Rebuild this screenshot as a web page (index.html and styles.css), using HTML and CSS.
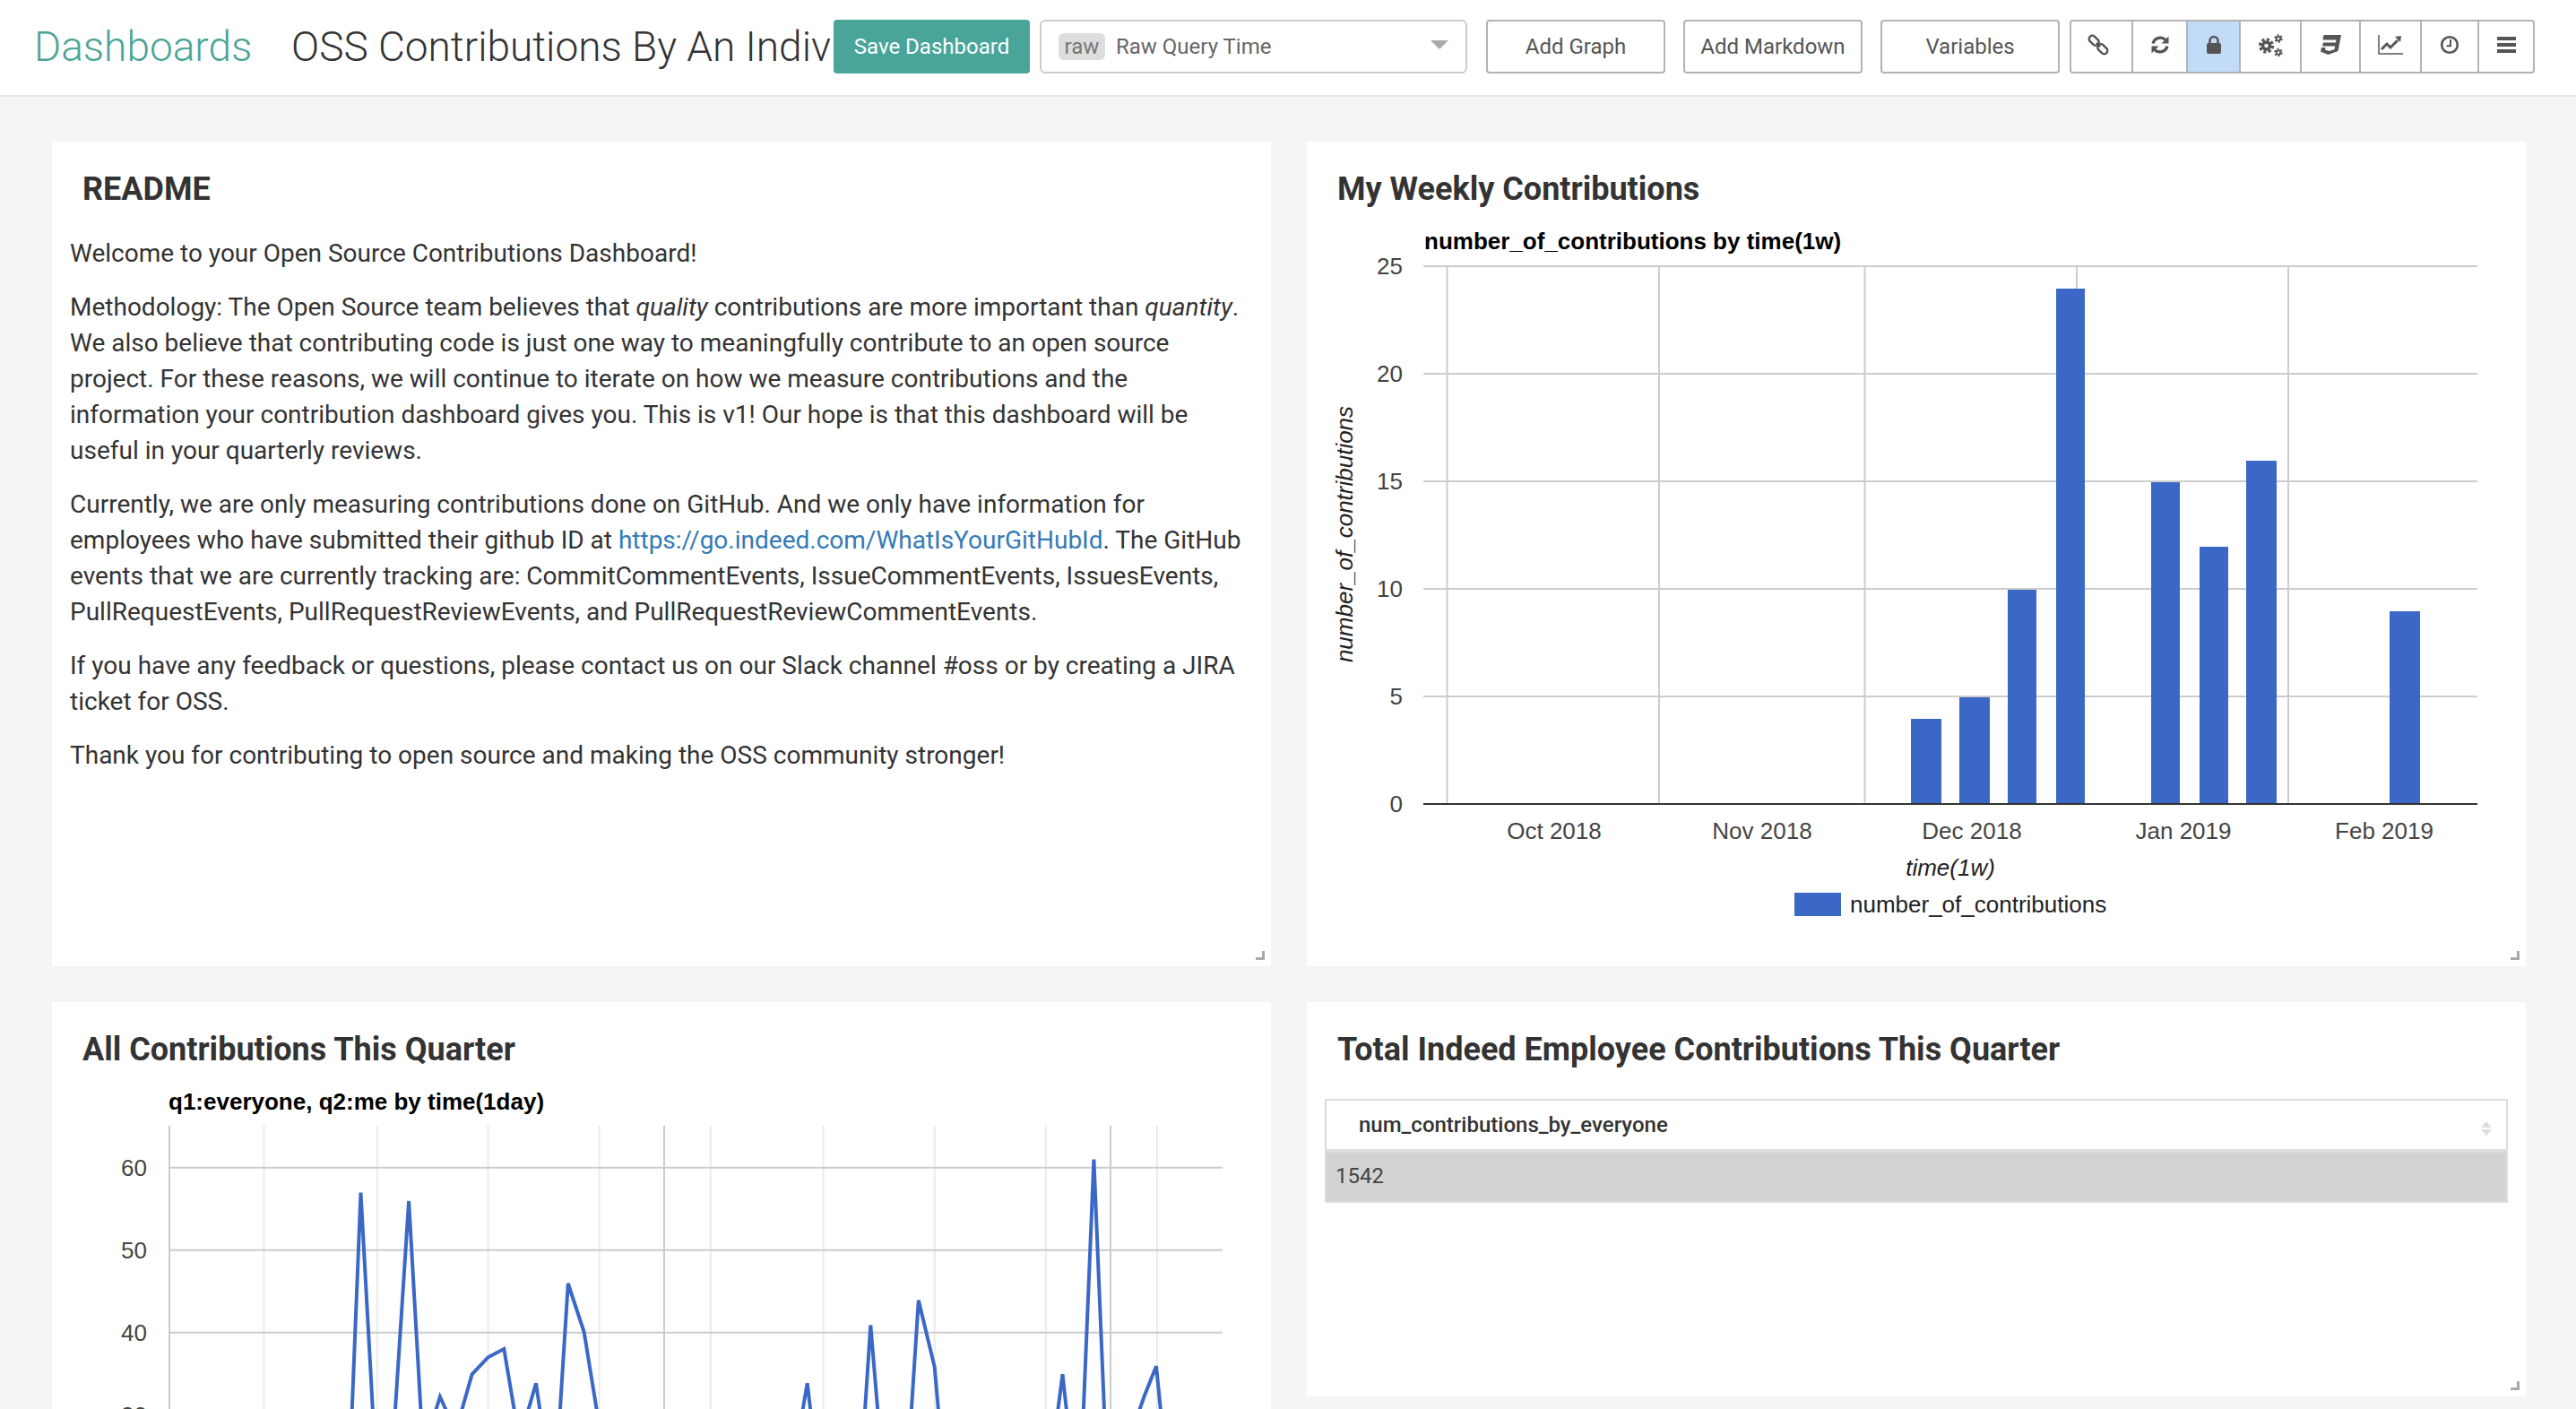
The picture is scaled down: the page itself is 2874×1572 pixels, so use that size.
FILE: index.html
```html
<!DOCTYPE html>
<html lang="en">
<head>
    <meta charset="UTF-8">
    <title>OSS Contributions By An Individual Contributor</title>
    <link rel="stylesheet" href="styles.css">
</head>
<body>
    <header class="topbar">
        <a class="brand">Dashboards</a>
        <div class="dash-title">OSS Contributions By An Individual Contributor</div>
        <button class="btn btn-save">Save Dashboard</button>
        <div class="query-select">
            <span class="query-tag">raw</span>
            <span class="query-name">Raw Query Time</span>
            <span class="query-arrow"></span>
        </div>
        <button class="btn btn-add">Add Graph</button>
        <button class="btn btn-add">Add Markdown</button>
        <button class="btn btn-add">Variables</button>
        <div class="tools">
            <div class="tool t-link">
                <svg class="icon" width="24" height="24" viewBox="0 0 24 24"><g transform="rotate(-45 12 12)" fill="none" stroke="#555" stroke-width="2.400"><rect x="8.300" y="-1" width="7.400" height="12.500" rx="3.700"/><rect x="8.300" y="12.500" width="7.400" height="12.500" rx="3.700"/><path d="M12 9v6"/></g></svg>
            </div>
            <div class="tool t-refresh">
                <svg class="icon" width="24" height="24" viewBox="0 0 24 24"><g fill="none" stroke="#555" stroke-width="3.200"><path d="M4 10.500A8.400 8.400 0 0 1 18.500 7"/><path d="M20 13.500A8.400 8.400 0 0 1 5.500 17"/></g><path fill="#555" d="M21.500 2.500v8h-8zM2.500 21.500v-8h8z"/></svg>
            </div>
            <div class="tool t-lock active">
                <svg class="icon" width="24" height="24" viewBox="0 0 24 24"><rect x="4" y="10" width="16" height="12" rx="2" fill="#555"/><path d="M7.500 10.500V7.500a4.500 4.500 0 0 1 9 0v3" fill="none" stroke="#555" stroke-width="2.600"/></svg>
            </div>
            <div class="tool t-cogs">
                <svg class="icon" width="27" height="25" viewBox="0 0 27 25"><g fill="none" stroke="#555"><circle cx="8.500" cy="13" r="4" stroke-width="3.600"/><circle cx="8.500" cy="13" r="7" stroke-width="3.200" stroke-dasharray="3.200 2.300"/><circle cx="22" cy="5" r="2.300" stroke-width="1.900"/><circle cx="22" cy="5" r="4" stroke-width="1.600" stroke-dasharray="2.200 2"/><circle cx="22" cy="20.500" r="2.300" stroke-width="1.900"/><circle cx="22" cy="20.500" r="4" stroke-width="1.600" stroke-dasharray="2.200 2"/></g></svg>
            </div>
            <div class="tool t-css">
                <svg class="icon" width="24" height="22" viewBox="0 0 24 22"><path fill="#555" d="M4.500 0H24l-3.500 18-11 4L1 18.500 2 14h4.500L6 16.500l4.500 1.500 6-2 .7-3.500H3l1-4h14l.5-3h-15z"/></svg>
            </div>
            <div class="tool t-chart">
                <svg class="icon" width="28" height="22" viewBox="0 0 28 22"><path d="M1 0v21h27" fill="none" stroke="#555" stroke-width="1.500"/><path d="M4 16l6-6 4 4 8-8" fill="none" stroke="#555" stroke-width="3"/><path fill="#555" d="M19 2l7-1-1 7z"/></svg>
            </div>
            <div class="tool t-clock">
                <svg class="icon" width="22" height="22" viewBox="0 0 22 22"><circle cx="11" cy="11" r="8.800" fill="none" stroke="#555" stroke-width="2.600"/><path d="M12 5v7.200H7.500" fill="none" stroke="#555" stroke-width="2"/></svg>
            </div>
            <div class="tool t-bars">
                <svg class="icon" width="21" height="18" viewBox="0 0 21 18"><path fill="#555" d="M0 0h21v4H0zM0 7h21v4H0zM0 14h21v4H0z"/></svg>
            </div>
        </div>
    </header>

    <main class="board">
        <section class="panel panel-top">
            <h2>README</h2>
            <div class="readme">
                <p>Welcome to your Open Source Contributions Dashboard!</p>
                <p>Methodology: The Open Source team believes that <em>quality</em> contributions are more important than <em>quantity</em>. We also believe that contributing code is just one way to meaningfully contribute to an open source project. For these reasons, we will continue to iterate on how we measure contributions and the information your contribution dashboard gives you. This is v1! Our hope is that this dashboard will be useful in your quarterly reviews.</p>
                <p>Currently, we are only measuring contributions done on GitHub. And we only have information for employees who have submitted their github ID at <a href="#">https://go.indeed.com/WhatIsYourGitHubId</a>. The GitHub events that we are currently tracking are: CommitCommentEvents, IssueCommentEvents, IssuesEvents, PullRequestEvents, PullRequestReviewEvents, and PullRequestReviewCommentEvents.</p>
                <p>If you have any feedback or questions, please contact us on our Slack channel #oss or by creating a JIRA ticket for OSS.</p>
                <p>Thank you for contributing to open source and making the OSS community stronger!</p>
            </div>
            <span class="resize-handle"></span>
        </section>

        <section class="panel panel-top">
            <h2>My Weekly Contributions</h2>
            <svg class="chart" width="1360" height="838" viewBox="0 0 1360 838">
                <text class="c-title" x="131" y="38">number_of_contributions by time(1w)</text>
                <g class="grid">
                    <path d="M130 57H1306M130 177H1306M130 297H1306M130 417H1306M130 537H1306"/>
                    <path d="M156.500 57V657M393 57V657M622.500 57V657M859 57V657M1095 57V657"/>
                </g>
                <g class="bars">
                    <rect x="674" y="562" width="34" height="95"/>
                    <rect x="728" y="538" width="34" height="119"/>
                    <rect x="782" y="418" width="32" height="239"/>
                    <rect x="836" y="82" width="32" height="575"/>
                    <rect x="942" y="298" width="32" height="359"/>
                    <rect x="996" y="370" width="32" height="287"/>
                    <rect x="1048" y="274" width="34" height="383"/>
                    <rect x="1208" y="442" width="34" height="215"/>
                </g>
                <path class="axis" d="M130 657H1306"/>
                <g class="y-labels">
                    <text x="107" y="66">25</text>
                    <text x="107" y="186">20</text>
                    <text x="107" y="306">15</text>
                    <text x="107" y="426">10</text>
                    <text x="107" y="546">5</text>
                    <text x="107" y="666">0</text>
                </g>
                <g class="x-labels">
                    <text x="276" y="696">Oct 2018</text>
                    <text x="508" y="696">Nov 2018</text>
                    <text x="742" y="696">Dec 2018</text>
                    <text x="978" y="696">Jan 2019</text>
                    <text x="1202" y="696">Feb 2019</text>
                </g>
                <text class="c-axis-title" x="718" y="737">time(1w)</text>
                <text class="c-axis-title" transform="translate(51 356) rotate(-90)">number_of_contributions</text>
                <rect class="swatch" x="544" y="756" width="52" height="26"/>
                <text class="c-legend" x="606" y="778">number_of_contributions</text>
            </svg>
            <span class="resize-handle"></span>
        </section>

        <section class="panel panel-long">
            <h2>All Contributions This Quarter</h2>
            <svg class="chart" width="1360" height="440" viewBox="0 0 1360 440">
                <text class="c-title" x="130" y="38">q1:everyone, q2:me by time(1day)</text>
                <path class="grid-minor" d="M236.500 56V400M363 56V400M486.500 56V400M610.600 56V400M734.700 56V400M860.600 56V400M984.700 56V400M1108.800 56V400M1233 56V400"/>
                <g class="grid">
                    <path d="M131 56V400M683 56V400M1181 56V400"/>
                    <path d="M131 102.700H1306M131 194.700H1306M131 286.700H1306M131 378.700H1306"/>
                </g>
                <g class="y-labels">
                    <text x="106" y="111.700">60</text>
                    <text x="106" y="203.700">50</text>
                    <text x="106" y="295.700">40</text>
                    <text x="106" y="387.700">30</text>
                </g>
                <path class="series" d="M334.700 374L344.500 130.700L357.900 374M382.900 374L398.100 140L411.500 374M428 374L432.900 358.300L440 374M457 374L468.600 333.300L486.500 314.300L504.300 305L515.900 374M531.100 374L540 343.300L544.500 374M566.800 374L575.800 232L593.600 286L607.900 374M837.400 374L842.700 343.300L846.300 374M907 374L913.300 278.300L921.300 374M958.800 374L966.800 250.700L984.700 325L989 374M1122.200 374L1127.500 333.300L1132 374M1150.800 374L1162.400 93.700L1174 374M1213 374L1218.500 358L1232 324.300L1237 374"/>
            </svg>
        </section>

        <section class="panel panel-short">
            <h2>Total Indeed Employee Contributions This Quarter</h2>
            <div class="table-wrap">
                <table class="data-table">
                    <thead>
                        <tr>
                            <th>num_contributions_by_everyone
                                <svg class="sort" width="14" height="16" viewBox="0 0 14 16"><path fill="#ddd" d="M7 0l6 7H1zM7 16l6-7H1z"/></svg>
                            </th>
                        </tr>
                    </thead>
                    <tbody>
                        <tr><td>1542</td></tr>
                    </tbody>
                </table>
            </div>
            <span class="resize-handle"></span>
        </section>
    </main>
</body>
</html>
```
FILE: styles.css
```css
html, body {
    margin: 0;
    height: 1572px;
    overflow: hidden;
}
body {
    background-color: #f5f5f5;
    color: #333;
    font-family: Roboto, "Noto Sans", sans-serif;
    font-size: 28px;
}

/* top bar */
.topbar {
    display: flex;
    align-items: center;
    height: 104px;
    padding: 0 0 2px 38px;
    background-color: #fff;
    border-bottom: 2px solid #e7e7e7;
}
.brand {
    width: 240px;
    color: #4aa598;
    font-size: 46px;
    font-weight: 300;
    white-space: nowrap;
}
.dash-title {
    width: 601px;
    margin-left: 47px;
    overflow: hidden;
    color: #333;
    font-size: 46px;
    font-weight: 300;
    white-space: nowrap;
}
.btn {
    box-sizing: border-box;
    height: 60px;
    padding: 0;
    background-color: #fff;
    border: 2px solid #b3b3b3;
    border-radius: 4px;
    color: #555;
    font-family: inherit;
    font-size: 24px;
}
.btn-save {
    width: 219px;
    margin-left: 4px;
    background-color: #49a59a;
    border: none;
    color: #fff;
}
.btn-add {
    width: 200px;
    margin-left: 20px;
}
.query-select {
    box-sizing: border-box;
    display: flex;
    align-items: center;
    width: 477px;
    height: 60px;
    margin-left: 11px;
    padding: 0 19px;
    border: 2px solid #ccc;
    border-radius: 6px;
    font-size: 24px;
}
.query-select + .btn-add {
    margin-left: 21px;
}
.query-tag {
    box-sizing: border-box;
    width: 52px;
    height: 30px;
    background-color: #ddd;
    border-radius: 6px;
    color: #777;
    line-height: 30px;
    text-align: center;
}
.query-name {
    flex: 1;
    margin-left: 12px;
    color: #666;
}
.query-arrow {
    width: 0;
    height: 0;
    margin-bottom: 4px;
    border-top: 10px solid #aaa;
    border-left: 10px solid transparent;
    border-right: 10px solid transparent;
}
.tools {
    box-sizing: border-box;
    display: flex;
    width: 519px;
    height: 60px;
    margin-left: 11px;
    border: 2px solid #b3b3b3;
    border-radius: 4px;
}
.tool {
    box-sizing: border-box;
    display: flex;
    align-items: center;
    justify-content: center;
    padding-bottom: 4px;
    border-right: 2px solid #b3b3b3;
}
.tool:last-child {
    border-right: none;
}
.tool.active {
    background-color: #c2dcf7;
}
.t-link { width: 69px; padding-right: 8px; }
.t-refresh { width: 61px; }
.t-lock { width: 59px; }
.t-cogs { width: 68px; }
.t-css { width: 66px; }
.t-chart { width: 68px; }
.t-clock { width: 64px; }
.t-bars { flex: 1; }

/* panels */
.board {
    display: grid;
    grid-template-columns: 1360px 1360px;
    grid-template-rows: 920px 500px;
    column-gap: 40px;
    row-gap: 40px;
    padding: 50px 0 0 58px;
}
.panel {
    position: relative;
    background-color: #fff;
}
.panel h2 {
    box-sizing: border-box;
    height: 82px;
    margin: 0;
    padding: 32px 0 0 34px;
    color: #333;
    font-size: 36px;
    font-weight: 700;
    line-height: 42px;
}
.panel-short {
    height: 440px;
}
.resize-handle {
    position: absolute;
    right: 7px;
    bottom: 7px;
    width: 7px;
    height: 7px;
    border-right: 3px solid #aaa;
    border-bottom: 3px solid #aaa;
}

/* readme */
.readme {
    padding: 23px 20px 0 20px;
    line-height: 40px;
}
.readme p {
    margin: 0 0 20px 0;
}
.readme a {
    color: #337ab7;
    text-decoration: none;
}

/* charts */
.chart {
    display: block;
    font-family: "Liberation Sans", Arial, sans-serif;
    font-size: 26px;
}
.c-title {
    fill: #000;
    font-weight: 700;
}
.grid path {
    fill: none;
    stroke: #ccc;
    stroke-width: 2;
}
.grid-minor {
    fill: none;
    stroke: #ebebeb;
    stroke-width: 2;
}
.axis {
    fill: none;
    stroke: #333;
    stroke-width: 2;
}
.bars rect, .swatch {
    fill: #3b68c6;
}
.series {
    fill: none;
    stroke: #3b68c6;
    stroke-width: 4;
}
.y-labels text {
    fill: #444;
    text-anchor: end;
}
.x-labels text {
    fill: #444;
    text-anchor: middle;
}
.c-axis-title {
    fill: #222;
    font-style: italic;
    text-anchor: middle;
}
.c-legend {
    fill: #222;
}

/* table */
.table-wrap {
    padding: 26px 20px 0 20px;
}
.data-table {
    width: 100%;
    border-collapse: collapse;
    border: 2px solid #ddd;
    font-size: 24px;
}
.data-table th {
    position: relative;
    height: 53px;
    padding: 0 0 1px 36px;
    border-bottom: 4px solid #ddd;
    color: #333;
    font-weight: 500;
    text-align: left;
}
.data-table td {
    height: 52px;
    padding: 0 10px 2px 10px;
    background-color: #d3d3d3;
    color: #444;
}
.sort {
    position: absolute;
    right: 15px;
    top: 23px;
}
```
